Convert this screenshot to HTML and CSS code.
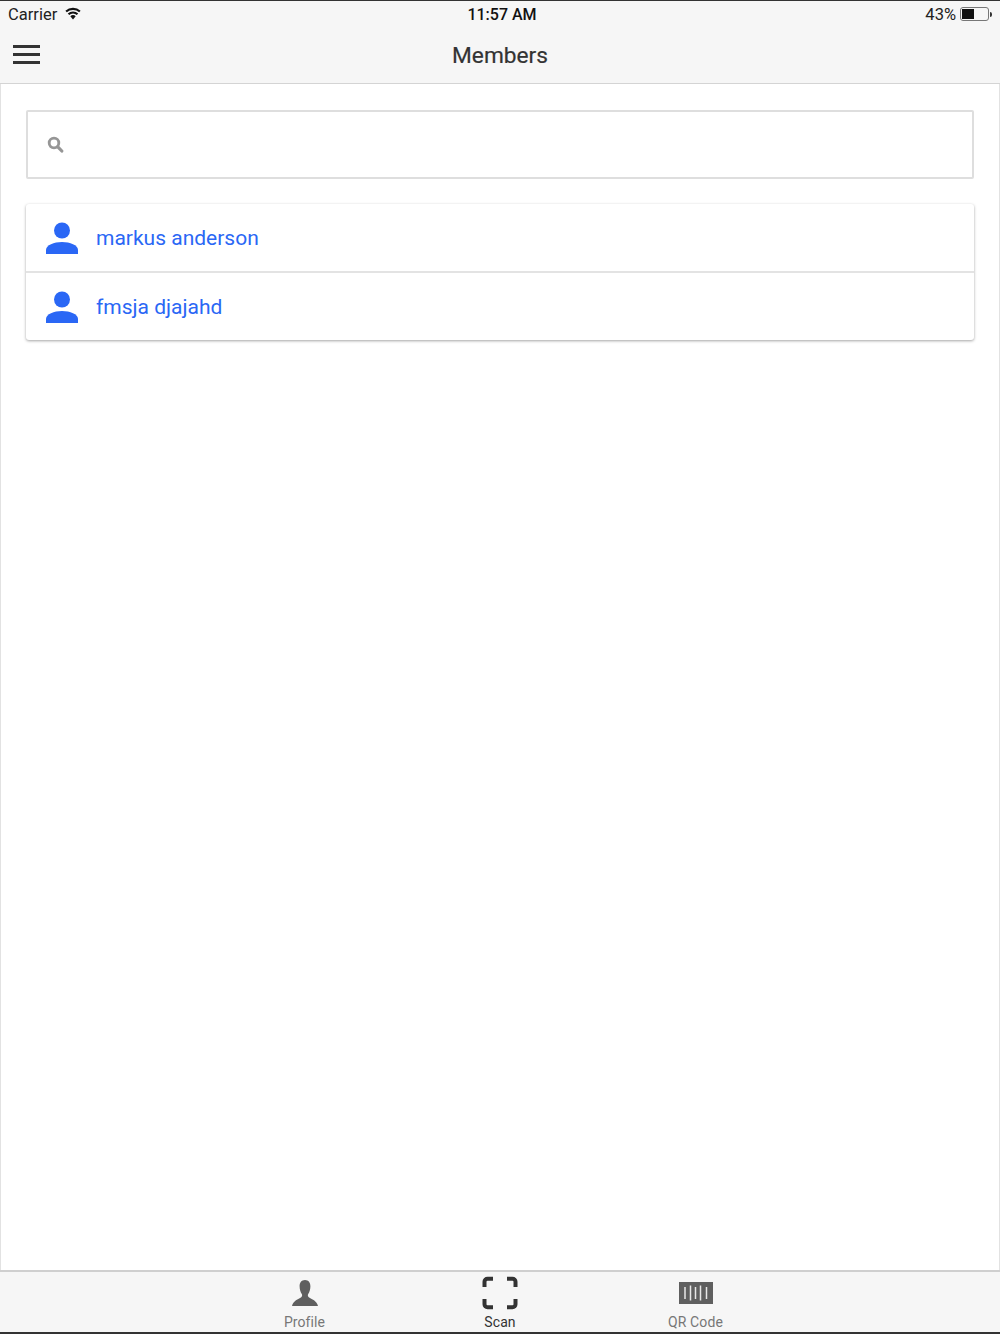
FILE: index.html
```html
<!DOCTYPE html>
<html lang="en">
<head>
<meta charset="utf-8">
<title>Members</title>
<link rel="stylesheet" href="styles.css">
</head>
<body>
<div class="app">
  <header class="header">
    <div class="status">
      <div class="status-left">
        <span>Carrier</span>
        <svg class="wifi" width="16" height="13" viewBox="0 0 16 13"><path d="M8 12.500 5.300 9.300a4 4 0 0 1 5.400 0Z" fill="#111"/><path d="M3.500 7.300a6.500 6.500 0 0 1 9 0M1.100 4.600a10 10 0 0 1 13.800 0" fill="none" stroke="#111" stroke-width="2.100"/></svg>
      </div>
      <div class="status-time">11:57 AM</div>
      <div class="status-right">
        <span class="percent">43%</span>
        <div class="battery"><div class="battery-fill"></div></div>
        <div class="battery-cap"></div>
      </div>
    </div>
    <div class="nav">
      <button class="menu" aria-label="Menu"><span></span><span></span><span></span></button>
      <h1 class="title">Members</h1>
    </div>
  </header>
  <main class="main">
    <div class="search">
      <svg width="17" height="17" viewBox="0 0 17 17"><circle cx="7" cy="7" r="4.800" fill="none" stroke="#969696" stroke-width="2.800"/><path d="m10.800 10.800 4 4.200" stroke="#969696" stroke-width="3.200" stroke-linecap="round"/></svg>
    </div>
    <ul class="list">
      <li class="row">
        <svg class="person" width="34" height="34" viewBox="0 0 34 34"><circle cx="17" cy="9.500" r="8"/><path d="M1 33v-4c0-5 8-8 16-8s16 3 16 8v4Z"/></svg>
        <span class="name">markus anderson</span>
      </li>
      <li class="row">
        <svg class="person" width="34" height="34" viewBox="0 0 34 34"><circle cx="17" cy="9.500" r="8"/><path d="M1 33v-4c0-5 8-8 16-8s16 3 16 8v4Z"/></svg>
        <span class="name">fmsja djajahd</span>
      </li>
    </ul>
  </main>
  <nav class="tabs">
    <div class="tab">
      <div class="tab-icon">
        <svg width="28" height="28" viewBox="0 0 28 28"><path d="M14 1c-3.600 0-5.400 2.800-5.400 6.200 0 3 .9 5.800 2.200 7.800.6 1 .4 2.500-.6 3.300C7.500 20 2 22 1 27h26c-1-5-6.500-7-9.200-8.700-1-.8-1.200-2.300-.6-3.300 1.300-2 2.200-4.800 2.200-7.800C19.400 3.800 17.600 1 14 1Z" fill="#5f5f5f"/></svg>
      </div>
      <span class="tab-label">Profile</span>
    </div>
    <div class="tab active">
      <div class="tab-icon">
        <svg width="36" height="34" viewBox="0 0 36 34"><path d="M11 2.800H5.500a3 3 0 0 0-3 3V11M25 2.800h5.500a3 3 0 0 1 3 3V11M11 31.200H5.500a3 3 0 0 1-3-3V23M25 31.200h5.500a3 3 0 0 0 3-3V23" fill="none" stroke="#333" stroke-width="4"/></svg>
      </div>
      <span class="tab-label">Scan</span>
    </div>
    <div class="tab">
      <div class="tab-icon">
        <svg width="34" height="22" viewBox="0 0 34 22"><rect width="34" height="22" fill="#5f5f5f"/><path d="M6 5v12M11.500 3.500v15M16.500 5v12M21.500 3.500v15M27.500 5v12" stroke="#e8e8e8" stroke-width="1.500"/></svg>
      </div>
      <span class="tab-label">QR Code</span>
    </div>
  </nav>
</div>
</body>
</html>
```
FILE: styles.css
```css
* { box-sizing: border-box; }
html, body { margin: 0; height: 100%; background: #fff; }
body { font-family: Roboto, "Liberation Sans", sans-serif; color: #333; }
.app { display: flex; flex-direction: column; width: 1000px; height: 1334px; overflow: hidden; border-top: 1px solid #333; border-bottom: 2px solid #333; }
.header { flex: none; height: 83px; background: #f6f6f6; border-bottom: 1px solid #d4d4d4; }
.status { display: grid; grid-template-columns: 1fr auto 1fr; align-items: center; height: 26px; padding: 0 8px; font-size: 16.500px; color: #222; }
.status-left { display: flex; align-items: center; gap: 8px; }
.wifi { margin-top: -2px; }
.status-time { font-size: 16px; font-weight: 500; padding-left: 4px; color: #111; }
.status-right { display: flex; align-items: center; justify-content: flex-end; }
.percent { margin-right: 4px; }
.battery { width: 29px; height: 14px; border: 1px solid #777; border-radius: 3px; padding: 1px; }
.battery-fill { width: 12px; height: 100%; background: #111; }
.battery-cap { width: 2px; height: 5px; margin-left: 1px; background: #333; border-radius: 0 2px 2px 0; }
.nav { position: relative; display: flex; align-items: center; justify-content: center; height: 56px; }
.menu { position: absolute; left: 13px; top: 18px; display: flex; flex-direction: column; gap: 5px; width: 27px; padding: 0; border: 0; background: none; }
.menu span { display: block; height: 3px; background: #333; }
.title { margin: 0; font-size: 22.700px; font-weight: 400; color: #333; -webkit-text-stroke: 0.2px #333; }
.main { flex: 1; min-height: 0; padding: 26px 25px; border-left: 1px solid #e2e2e2; border-right: 1px solid #e2e2e2; background: #fff; }
.search { display: flex; align-items: center; height: 69px; padding-left: 19px; border: 2px solid #dedede; border-radius: 2px; margin-bottom: 25px; }
.list { list-style: none; margin: 0; padding: 0; background: #fff; border-radius: 3px; box-shadow: 0 1px 3px rgba(0,0,0,.36); }
.row { display: flex; align-items: center; height: 67px; padding-left: 19px; gap: 17px; }
.row + .row { height: 69px; border-top: 2px solid #e3e3e3; }
.person { fill: #2a67f5; }
.name { font-size: 21px; color: #2a67f5; }
.tabs { flex: none; display: flex; justify-content: center; height: 62px; background: #f6f6f6; border-top: 2px solid #cfcfcf; }
.tab { display: flex; flex-direction: column; align-items: center; width: 195.500px; color: #777; }
.tab.active { color: #333; }
.tab-icon { display: flex; align-items: center; justify-content: center; height: 42px; }
.tab-label { font-size: 14px; line-height: 16px; letter-spacing: .1px; }
```
